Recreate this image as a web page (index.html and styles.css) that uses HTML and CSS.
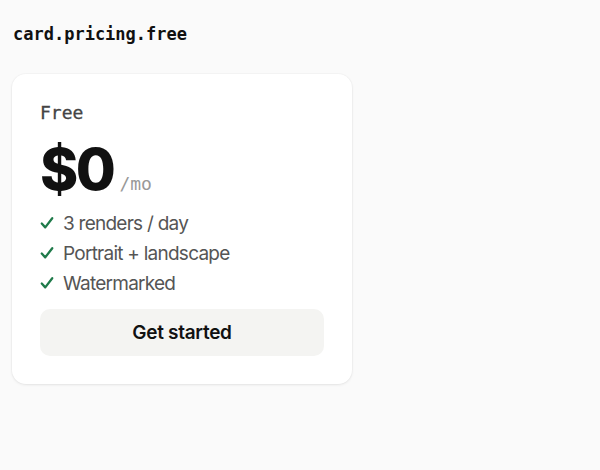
FILE: index.html
```html
<!DOCTYPE html>
<html lang="en">
<head>
  <meta charset="UTF-8">
  <title>card.pricing.free</title>
  <link rel="stylesheet" href="styles.css">
</head>
<body>
  <div class="label">card.pricing.free</div>

  <div class="card">
    <div class="plan">Free</div>
    <div class="price">
      <span class="amount">$0</span>
      <span class="period">/mo</span>
    </div>
    <ul class="features">
      <li>
        <svg class="check" viewBox="0 0 16 16"><path d="M2 8.6 L6 13 L14 2.5"/></svg>
        3 renders / day
      </li>
      <li>
        <svg class="check" viewBox="0 0 16 16"><path d="M2 8.6 L6 13 L14 2.5"/></svg>
        Portrait + landscape
      </li>
      <li>
        <svg class="check" viewBox="0 0 16 16"><path d="M2 8.6 L6 13 L14 2.5"/></svg>
        Watermarked
      </li>
    </ul>
    <button class="cta">Get started</button>
  </div>
</body>
</html>
```

FILE: styles.css
```css
body {
  margin: 0;
  padding: 24px 12px;
  background: #fafafa;
  font-family: Inter, "Noto Sans", sans-serif;
  color: #111;
}

.label {
  font-family: "DejaVu Sans Mono", "Liberation Mono", monospace;
  font-size: 17px;
  font-weight: bold;
  line-height: 20px;
  margin-left: 1px;
  margin-bottom: 30px;
}

.card {
  width: 340px;
  box-sizing: border-box;
  background: #fff;
  border-radius: 14px;
  box-shadow: 0 1px 3px rgba(0, 0, 0, 0.08), 0 0 0 1px rgba(0, 0, 0, 0.02);
  padding: 27px 28px 28px;
}

.plan {
  font-family: "DejaVu Sans Mono", "Liberation Mono", monospace;
  font-size: 18px;
  color: #444;
  line-height: 24px;
  -webkit-text-stroke: 0.3px #444;
}

.price {
  display: flex;
  align-items: baseline;
  gap: 6px;
  margin-top: 12px;
}

.amount {
  font-size: 58px;
  font-weight: 800;
  letter-spacing: -2.5px;
  line-height: 64px;
}

.period {
  font-family: "DejaVu Sans Mono", "Liberation Mono", monospace;
  font-size: 18px;
  color: #999;
}

.features {
  list-style: none;
  margin: 8px 0 0;
  padding: 0;
}

.features li {
  display: flex;
  align-items: center;
  gap: 9px;
  font-size: 19px;
  color: #555;
  line-height: 30px;
  letter-spacing: -0.75px;
}

.check {
  width: 14px;
  height: 14px;
  flex: none;
  margin-top: -2px;
  fill: none;
  stroke: #1f7a4a;
  stroke-width: 2.6;
  stroke-linecap: round;
  stroke-linejoin: round;
}

.cta {
  display: block;
  width: 100%;
  height: 47px;
  margin-top: 10px;
  border: 0;
  border-radius: 10px;
  background: #f4f4f2;
  font-family: Inter, "Noto Sans", sans-serif;
  font-size: 19px;
  font-weight: 600;
  color: #111;
  letter-spacing: -0.3px;
}
```
